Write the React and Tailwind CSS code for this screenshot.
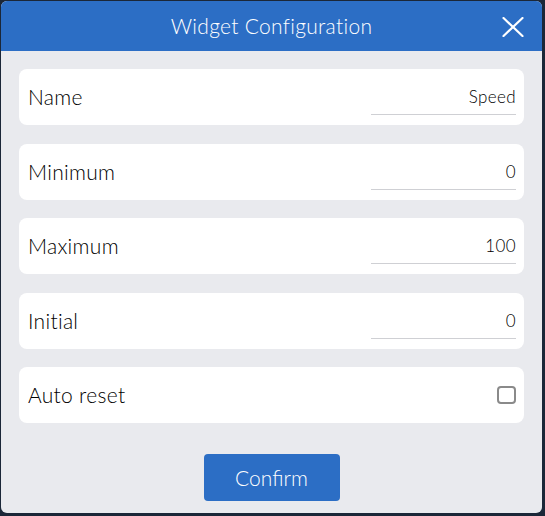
const fields = [
  { label: 'Name', value: 'Speed' },
  { label: 'Minimum', value: '0' },
  { label: 'Maximum', value: '100' },
  { label: 'Initial', value: '0' },
];

function App() {
  return (
    <div className="w-[545px] h-[516px] bg-[#1b2738] pl-px pt-px pr-[3px] pb-[3px] font-['Lato',sans-serif]">
      <div className="h-[512px] rounded-[6px] overflow-hidden bg-[#e9eaee] flex flex-col">
        <div className="relative h-[50px] bg-[#2c6ec5] flex items-center justify-center">
          <span className="text-white text-[21px] font-light tracking-[0.3px]">Widget Configuration</span>
          <button className="absolute right-[18px] top-[16px]">
            <svg width="22" height="20" viewBox="0 0 22 20" fill="none" stroke="white" strokeWidth="2.2" strokeLinecap="round">
              <path d="M1.5 1 L20.5 19 M20.5 1 L1.5 19" />
            </svg>
          </button>
        </div>

        <div className="px-[18px] pt-[18px] flex flex-col gap-[18.5px]">
          {fields.map((f) => (
            <div
              key={f.label}
              className="h-[56px] bg-white rounded-[8px] flex items-center justify-between pl-[9px] pr-[8px]"
            >
              <span className="text-[21px] font-light tracking-[0.3px] text-black">{f.label}</span>
              <div className="w-[145px] h-[36px] border-b border-[#cfd0d4] text-right text-[17px] font-light tracking-[0.4px] leading-[36px] text-black">
                {f.value}
              </div>
            </div>
          ))}
          <div className="h-[56px] bg-white rounded-[8px] flex items-center justify-between pl-[9px] pr-[8px]">
            <span className="text-[21px] font-light tracking-[0.3px] text-black">Auto reset</span>
            <div className="w-[19px] h-[18px] rounded-[4px] border-2 border-[#8a8a8a] bg-white" />
          </div>
        </div>

        <div className="flex justify-center mt-[31px]">
          <button className="w-[136px] h-[47px] rounded-[4px] bg-[#2c6ec5] text-white text-[21px] font-light">
            Confirm
          </button>
        </div>
      </div>
    </div>
  );
}

export default App;
